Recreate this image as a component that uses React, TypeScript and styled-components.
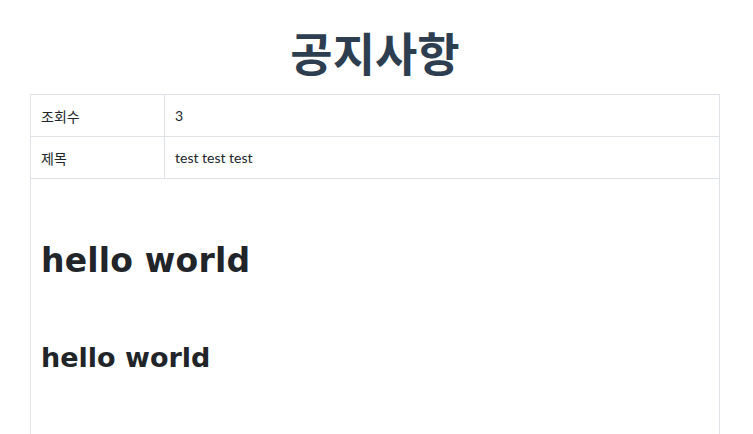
import styled, { createGlobalStyle } from 'styled-components';

const GlobalStyle = createGlobalStyle`
  body {
    margin: 0;
    background: #fff;
    font-family: Lato, "Noto Sans CJK KR", sans-serif;
    color: #212529;
  }
`;

const Page = styled.div`
  padding: 0 33px 0 30px;
`;

const Title = styled.h1`
  margin: 0;
  padding: 22px 0 14px;
  text-align: center;
  font-family: "Noto Sans CJK KR", sans-serif;
  font-weight: 700;
  font-size: 46px;
  line-height: 58px;
  color: #2c3e50;
`;

const Table = styled.table`
  width: 100%;
  border-collapse: collapse;
  font-size: 14px;
  color: #212529;
`;

const Cell = styled.td<{ $label?: boolean }>`
  border: 1px solid #dee2e6;
  padding: 0 10px;
  height: 41px;
  width: ${(p) => (p.$label ? '113px' : 'auto')};
  vertical-align: middle;
  font-family: Lato, "Noto Sans CJK KR", sans-serif;
`;

const Body = styled.td`
  border: 1px solid #dee2e6;
  border-bottom: none;
  padding: 62px 10px 60px;
  vertical-align: top;
  height: 240px;
`;

const Heading = styled.h1<{ $size: number; $gap: number }>`
  margin: 0 0 ${(p) => p.$gap}px;
  font-family: "DejaVu Sans", sans-serif;
  font-weight: 700;
  font-size: ${(p) => p.$size}px;
  letter-spacing: ${(p) => (p.$size > 30 ? '0.2px' : '0')};
  line-height: 1.2;
  color: #212529;
`;

export default function App() {
  return (
    <>
      <GlobalStyle />
      <Page>
        <Title>공지사항</Title>
        <Table>
          <tbody>
            <tr>
              <Cell $label>조회수</Cell>
              <Cell>3</Cell>
            </tr>
            <tr>
              <Cell $label>제목</Cell>
              <Cell>test test test</Cell>
            </tr>
            <tr>
              <Body colSpan={2}>
                <Heading $size={33} $gap={61}>hello world</Heading>
                <Heading $size={27} $gap={0}>hello world</Heading>
              </Body>
            </tr>
          </tbody>
        </Table>
      </Page>
    </>
  );
}
